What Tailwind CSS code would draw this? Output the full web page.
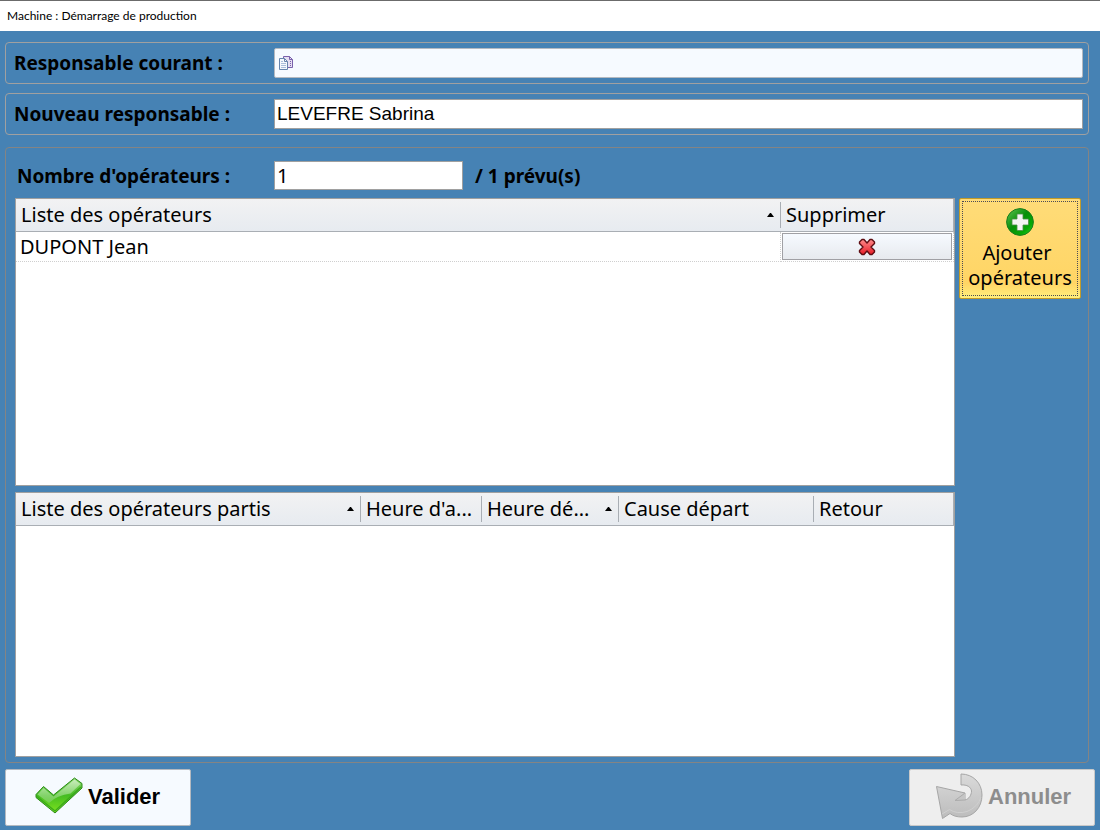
<!DOCTYPE html>
<html lang="fr">
<head>
  <meta charset="UTF-8">
  <meta name="viewport" content="width=device-width,initial-scale=1">
  <title>Machine : Démarrage de production</title>
  <script src="https://cdn.jsdelivr.net/npm/@tailwindcss/browser@4"></script>
</head>
<body class="min-h-screen flex flex-col bg-[#4682b4] text-black font-['Noto_Sans',sans-serif]">

  <header class="h-[31px] shrink-0 border-t border-[#6b6b6b] bg-white px-[7px] flex items-center">
    <h1 class="text-[12px] leading-4 font-['Lato',sans-serif]">Machine : Démarrage de production</h1>
  </header>

  <form class="flex-1 flex flex-col pt-[11px] pb-1 px-[5px]">

    <!-- Responsables -->
    <div class="h-[42px] mr-[6px] pl-2 pr-[5px] flex items-center border border-[#a0a0a0] rounded">
      <label for="respCourant" class="w-[260px] shrink-0 text-[19px] leading-6 font-bold">Responsable courant :</label>
      <button type="button" id="respCourant" aria-label="Responsable courant" class="flex-1 h-[30px] px-[3px] flex items-center bg-[#f6faff] border border-[#b4b9c0] rounded-xs">
        <svg class="w-4 h-4" viewBox="0 0 16 16" fill="none">
          <path d="M5.500 1.500h6l3 3v8h-9z" fill="#e6def2" stroke="#7961ab"/>
          <path d="M11.500 1.500v3h3M12 6.500h1M12 8.500h1M12 10.500h1" stroke="#7961ab"/>
          <path d="M1.500 3.500h5l3 3v8h-8z" fill="#f4f8fd" stroke="#6684ad"/>
          <path d="M6.500 3.500v3h3" stroke="#6684ad"/>
          <path d="M3 6.500h2M3 8.500h5M3 10.500h5M3 12.500h5" stroke="#a9bedb"/>
        </svg>
      </button>
    </div>

    <div class="h-[42px] mt-[9px] mr-[6px] pl-2 pr-[5px] flex items-center border border-[#a0a0a0] rounded">
      <label for="nouvResp" class="w-[260px] shrink-0 text-[19px] leading-6 font-bold">Nouveau responsable :</label>
      <input type="text" id="nouvResp" value="LEVEFRE Sabrina" class="flex-1 min-w-0 h-[30px] px-[2px] bg-white border border-[#a0a0a0] text-[19px] font-['Liberation_Sans',sans-serif]">
    </div>

    <!-- Opérateurs -->
    <section class="flex-1 flex flex-col mt-3 mr-[6px] pt-[13px] pb-[5px] pl-[9px] pr-[7px] border border-[#848484] rounded">
      <div class="flex items-center h-[29px]">
        <label for="nbOperateurs" class="w-[259px] pl-[2px] shrink-0 text-[19px] leading-6 font-bold">Nombre d'opérateurs :</label>
        <input type="text" id="nbOperateurs" value="1" class="w-[189px] h-[29px] px-[2px] bg-white border border-[#a0a0a0] text-[20px]">
        <span class="ml-3 text-[19px] leading-6 font-bold">/ 1 prévu(s)</span>
      </div>

      <div class="flex-1 flex gap-1 mt-2">
        <div class="flex-1 min-w-0 flex flex-col gap-[6px]">

          <div class="grow-[25] basis-[238px] bg-white border border-[#a0a0a0]">
            <table class="w-full table-fixed border-separate border-spacing-0 text-[20px] leading-7">
              <colgroup><col><col class="w-[173px]"></colgroup>
              <thead class="text-left">
                <tr class="h-[33px]">
                  <th class="p-0 font-normal border-b border-[#a9aeb4] bg-linear-to-b from-[#f2f2f3] to-[#e7ebf0]">
                    <div class="h-[26px] pl-[5px] pr-[6px] flex items-center justify-between border-r border-[#a9aeb4]">
                      <span class="truncate">Liste des opérateurs</span>
                      <svg class="w-[7px] h-1 shrink-0" viewBox="0 0 7 4"><path d="M3 0h1l3 4H0z"/></svg>
                    </div>
                  </th>
                  <th class="p-0 pl-[5px] font-normal border-b border-r border-[#a9aeb4] bg-linear-to-b from-[#f2f2f3] to-[#e7ebf0]">Supprimer</th>
                </tr>
              </thead>
              <tbody>
                <tr class="h-[30px]">
                  <td class="p-0 pl-1 border-b border-r border-dotted border-[#cfcfcf]">DUPONT Jean</td>
                  <td class="p-0 px-px border-b border-r border-dotted border-[#cfcfcf]">
                    <button type="button" aria-label="Supprimer DUPONT Jean" class="w-full h-[27px] flex items-center justify-center border border-[#a0a0a4] bg-linear-to-b from-[#f6faff] to-[#e7eaee]">
                      <svg class="w-[18px] h-[18px]" viewBox="0 0 18 18">
                        <defs><linearGradient id="rouge" x1="0" y1="0" x2="0" y2="1"><stop offset="0" stop-color="#ff8c8c"/><stop offset="1" stop-color="#e61c26"/></linearGradient></defs>
                        <path d="M4 1.500h2L9 5l3-3.500h2L16.500 4v1.500L13 9l3.500 3.500V14L14 16.500h-2L9 13l-3 3.500H4L1.500 14v-1.500L5 9 1.500 5.500V4z" fill="url(#rouge)" stroke="#5e0d12" stroke-width="1.400" stroke-linejoin="round"/>
                      </svg>
                    </button>
                  </td>
                </tr>
              </tbody>
            </table>
          </div>

          <div class="grow-[25] basis-[215px] bg-white border border-[#a0a0a0]">
            <table class="w-full table-fixed border-separate border-spacing-0 text-[20px] leading-7">
              <colgroup><col><col class="w-[121px]"><col class="w-[137px]"><col class="w-[195px]"><col class="w-[140px]"></colgroup>
              <thead class="text-left">
                <tr class="h-[33px]">
                  <th class="p-0 font-normal border-b border-[#a9aeb4] bg-linear-to-b from-[#f2f2f3] to-[#e7ebf0]">
                    <div class="h-[26px] pl-[5px] pr-[6px] flex items-center justify-between border-r border-[#a9aeb4]">
                      <span class="truncate">Liste des opérateurs partis</span>
                      <svg class="w-[7px] h-1 shrink-0" viewBox="0 0 7 4"><path d="M3 0h1l3 4H0z"/></svg>
                    </div>
                  </th>
                  <th class="p-0 font-normal border-b border-[#a9aeb4] bg-linear-to-b from-[#f2f2f3] to-[#e7ebf0]">
                    <div class="h-[26px] pl-[5px] pr-[5px] flex items-center border-r border-[#a9aeb4]"><span title="Heure d'arrivée">Heure d'a...</span></div>
                  </th>
                  <th class="p-0 font-normal border-b border-[#a9aeb4] bg-linear-to-b from-[#f2f2f3] to-[#e7ebf0]">
                    <div class="h-[26px] pl-[5px] pr-[6px] flex items-center justify-between border-r border-[#a9aeb4]">
                      <span title="Heure départ">Heure dé...</span>
                      <svg class="w-[7px] h-1 shrink-0" viewBox="0 0 7 4"><path d="M3 0h1l3 4H0z"/></svg>
                    </div>
                  </th>
                  <th class="p-0 font-normal border-b border-[#a9aeb4] bg-linear-to-b from-[#f2f2f3] to-[#e7ebf0]">
                    <div class="h-[26px] pl-[5px] flex items-center border-r border-[#a9aeb4]"><span class="truncate">Cause départ</span></div>
                  </th>
                  <th class="p-0 pl-[5px] font-normal border-b border-r border-[#a9aeb4] bg-linear-to-b from-[#f2f2f3] to-[#e7ebf0]">Retour</th>
                </tr>
              </thead>
              <tbody></tbody>
            </table>
          </div>
        </div>

        <button type="button" class="w-[122px] h-[101px] shrink-0 p-[2px] rounded-xs border border-[#c29b29] bg-linear-to-b from-[#ffdc78] via-[#ffd565] via-85% to-[#fff07c]">
          <span class="h-full flex flex-col items-center pt-[6px] border border-dotted border-[#4b4b55] text-[20px] leading-[25px]">
            <svg class="w-7 h-7 mb-1 shrink-0" viewBox="0 0 28 28">
              <defs><linearGradient id="vert" x1="0" y1="0" x2="1" y2="1"><stop offset="0" stop-color="#63c455"/><stop offset=".45" stop-color="#078f08"/><stop offset=".75" stop-color="#07a807"/><stop offset="1" stop-color="#2fdc2a"/></linearGradient></defs>
              <circle cx="14" cy="14" r="13.400" fill="url(#vert)" stroke="#1c7d1c"/>
              <path d="M11 6h6v5h5.500v6H17v5.500h-6V17H6v-6h5z" fill="#f4f4f4" stroke="#4a8f44" stroke-width=".8"/>
            </svg>
            <span class="pr-[6px]">Ajouter</span>
            <span>opérateurs</span>
          </span>
        </button>
      </div>
    </section>

    <!-- Actions -->
    <footer class="flex justify-between mt-[6px]">
      <button type="submit" class="w-[186px] h-[57px] pl-[29px] pb-[2px] flex items-center gap-[5px] rounded-xs border border-[#b4b9c0] bg-[#f6faff] text-[22px] font-bold font-['Liberation_Sans',sans-serif]">
        <svg class="w-12 h-12" viewBox="0 0 48 48">
          <defs>
            <linearGradient id="coche" x1="0" y1="0" x2="0" y2="1"><stop offset="0" stop-color="#8ed873"/><stop offset=".5" stop-color="#45bd22"/><stop offset="1" stop-color="#7ee31c"/></linearGradient>
            <linearGradient id="reflet" x1="0" y1="0" x2="0" y2="1"><stop offset="0" stop-color="#e4f7dd"/><stop offset="1" stop-color="#7ccf62"/></linearGradient>
          </defs>
          <path d="M1 21.500L8.500 13.500 18.500 22 39.500 5 47 10.500V15L20 40 1 24.500z" fill="url(#coche)" stroke="#2c8a18" stroke-width="1" stroke-linejoin="round"/>
          <path d="M2.500 21.500L8.500 15l10 8.500L39.500 6.500l6 4.500-10 9.500Q22 22 14 30z" fill="url(#reflet)" opacity=".7"/>
          <path d="M2 23.500L20 38 46 14" fill="none" stroke="#3aa81c" stroke-width="1.200"/>
        </svg>
        Valider
      </button>
      <button type="button" disabled class="w-[186px] h-[57px] pl-[25px] pb-[2px] flex items-center gap-[5px] rounded-xs border border-[#c8c8c8] bg-[#eeeeee] text-[#8d8d8d] text-[22px] font-bold font-['Liberation_Sans',sans-serif]">
        <svg class="w-12 h-12" viewBox="0 0 48 48">
          <defs><linearGradient id="gris" x1="0" y1="0" x2="0" y2="1"><stop offset="0" stop-color="#dadada"/><stop offset="1" stop-color="#bcbcbc"/></linearGradient></defs>
          <path d="M26 1C38 1 47 10 47 22 47 35 38 44 27 44 22 44 18 43 15 40.500L7.500 45.500 1.500 13.500 30 20V27C34 26 36.500 22 36.500 18 36 14 32 11.500 26 12z" fill="url(#gris)" stroke="#a6a6a6" stroke-linejoin="round"/>
          <path d="M30 20L20 27.500 30 27" fill="#c6c6c6" stroke="#ababab" stroke-linejoin="round"/>
          <path d="M7 41L14.500 36.500Q22 41.500 32 38.500 43 34 46 24" fill="none" stroke="#cfcfcf"/>
        </svg>
        Annuler
      </button>
    </footer>
  </form>

</body>
</html>
